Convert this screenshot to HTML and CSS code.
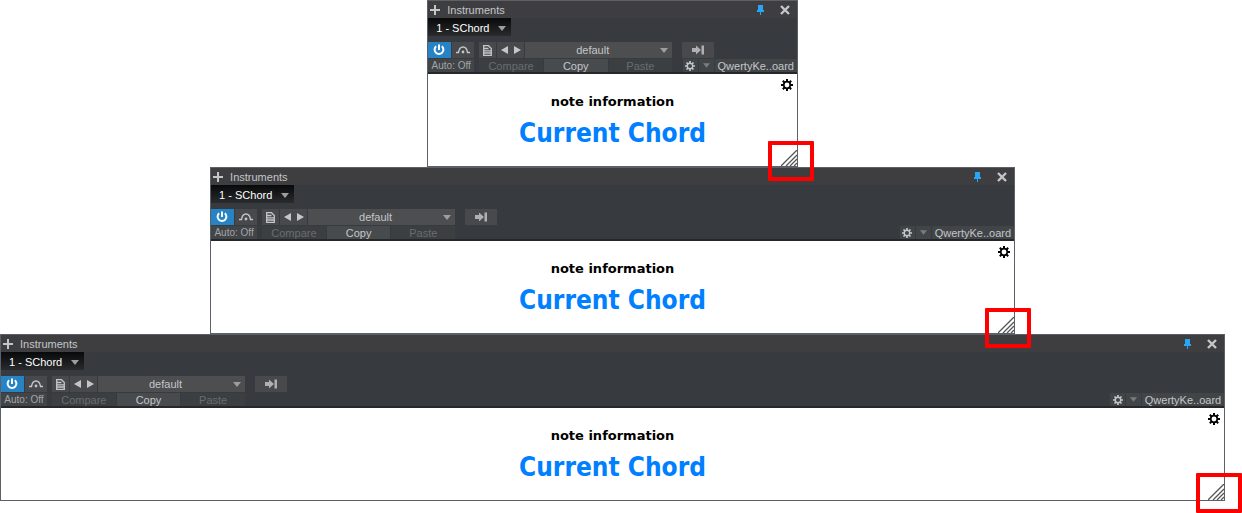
FILE: index.html
```html
<!DOCTYPE html>
<html lang="en">
<head>
<meta charset="utf-8">
<title>Instruments</title>
<link rel="stylesheet" href="styles.css">
</head>
<body>
<svg class="sprite" aria-hidden="true">
  <symbol id="plus" viewBox="0 0 10 10"><path d="M5 0V10M0 5H10" stroke="currentColor" stroke-width="2"/></symbol>
  <symbol id="pin" viewBox="0 0 9 10"><path d="M2 0H7V5H8V7H5V10H4V7H1V5H2Z" fill="currentColor"/></symbol>
  <symbol id="close" viewBox="0 0 10 10"><path d="M1 1L9 9M9 1L1 9" stroke="currentColor" stroke-width="2.4"/></symbol>
  <symbol id="down" viewBox="0 0 8 5"><path d="M0 0H8L4 5Z" fill="currentColor"/></symbol>
  <symbol id="left" viewBox="0 0 7 8"><path d="M7 0V8L0 4Z" fill="currentColor"/></symbol>
  <symbol id="right" viewBox="0 0 7 8"><path d="M0 0V8L7 4Z" fill="currentColor"/></symbol>
  <symbol id="power" viewBox="0 0 12 12"><path d="M3.2 2.2A4.4 4.4 0 1 0 8.8 2.2M6 .5V6" fill="none" stroke="currentColor" stroke-width="2"/></symbol>
  <symbol id="bypass" viewBox="0 0 14 8"><path d="M0 6.5H2.5C3 3 4.5 1 7 1S11 3 11.5 6.5H14" fill="none" stroke="currentColor" stroke-width="1.4"/><circle cx="7" cy="6" r="1.4" fill="currentColor"/></symbol>
  <symbol id="doc" viewBox="0 0 9 11"><path d="M.7.7H5.5L8.3 3.500V10.300H.7ZM1 3.500H5.500M1 5.800H8M1 8H8" fill="none" stroke="currentColor" stroke-width="1.300"/></symbol>
  <symbol id="jump" viewBox="0 0 12 10"><path d="M0 3H4V.5L9 5L4 9.500V7H0ZM9.500 0.500H12V9.500H9.500Z" fill="currentColor"/></symbol>
  <symbol id="gear" viewBox="0 0 12 12"><circle cx="6" cy="6" r="3.300" fill="none" stroke="currentColor" stroke-width="1.700"/><path d="M6 0V2.500M6 9.500V12M0 6H2.500M9.500 6H12M1.800 1.800L3.500 3.500M8.500 8.500L10.200 10.200M10.200 1.800L8.500 3.500M3.500 8.500L1.800 10.200" stroke="currentColor" stroke-width="2"/></symbol>
  <symbol id="grip" viewBox="0 0 16 16"><path d="M0 16L16 0M5 16L16 5M9 16L16 9M13 16L16 13" stroke="currentColor" stroke-width="1.300"/></symbol>
</svg>
<main class="stack">
  <section class="panel panel-small">
    <header class="titlebar">
      <button class="bare" aria-label="Add"><svg class="i10"><use href="#plus"/></svg></button>
      <h2 class="title">Instruments</h2>
      <button class="bare pin" aria-label="Pin"><svg class="pin-icon"><use href="#pin"/></svg></button>
      <button class="bare" aria-label="Close"><svg class="i10"><use href="#close"/></svg></button>
    </header>
    <div class="controls">
      <button class="tab">1 - SChord <svg class="down"><use href="#down"/></svg></button>
      <div class="row row-top">
        <div class="group state">
          <button class="cell power" aria-label="Power"><svg class="i12"><use href="#power"/></svg></button>
          <button class="cell" aria-label="Bypass"><svg class="bypass"><use href="#bypass"/></svg></button>
        </div>
        <div class="group presets">
          <button class="cell file" aria-label="Preset menu"><svg class="doc"><use href="#doc"/></svg></button>
          <div class="cell arrows"><button class="bare" aria-label="Previous"><svg class="arrow"><use href="#left"/></svg></button><button class="bare" aria-label="Next"><svg class="arrow"><use href="#right"/></svg></button></div>
          <div class="cell preset"><select class="select" aria-label="Preset"><option>default</option></select><svg class="down"><use href="#down"/></svg></div>
        </div>
        <button class="cell jump" aria-label="Output"><svg class="jump-icon"><use href="#jump"/></svg></button>
      </div>
      <div class="row row-bottom">
        <div class="group state"><button class="cell auto">Auto: Off</button></div>
        <div class="group presets compare-group">
          <button class="cell dim" disabled>Compare</button><button class="cell copy">Copy</button><button class="cell dim" disabled>Paste</button>
        </div>
        <div class="group device">
          <button class="cell" aria-label="Settings"><svg class="gear-small"><use href="#gear"/></svg></button>
          <button class="cell faint" aria-label="Device menu"><svg class="down"><use href="#down"/></svg></button>
          <button class="cell keyboard">QwertyKe..oard</button>
        </div>
      </div>
    </div>
    <div class="view">
      <button class="bare settings" aria-label="Plugin settings"><svg class="i12"><use href="#gear"/></svg></button>
      <p class="note">note information</p>
      <p class="chord">Current Chord</p>
      <svg class="grip"><use href="#grip"/></svg>
    </div>
    <span class="marker"></span>
  </section>

  <section class="panel panel-medium">
    <header class="titlebar">
      <button class="bare" aria-label="Add"><svg class="i10"><use href="#plus"/></svg></button>
      <h2 class="title">Instruments</h2>
      <button class="bare pin" aria-label="Pin"><svg class="pin-icon"><use href="#pin"/></svg></button>
      <button class="bare" aria-label="Close"><svg class="i10"><use href="#close"/></svg></button>
    </header>
    <div class="controls">
      <button class="tab">1 - SChord <svg class="down"><use href="#down"/></svg></button>
      <div class="row row-top">
        <div class="group state">
          <button class="cell power" aria-label="Power"><svg class="i12"><use href="#power"/></svg></button>
          <button class="cell" aria-label="Bypass"><svg class="bypass"><use href="#bypass"/></svg></button>
        </div>
        <div class="group presets">
          <button class="cell file" aria-label="Preset menu"><svg class="doc"><use href="#doc"/></svg></button>
          <div class="cell arrows"><button class="bare" aria-label="Previous"><svg class="arrow"><use href="#left"/></svg></button><button class="bare" aria-label="Next"><svg class="arrow"><use href="#right"/></svg></button></div>
          <div class="cell preset"><select class="select" aria-label="Preset"><option>default</option></select><svg class="down"><use href="#down"/></svg></div>
        </div>
        <button class="cell jump" aria-label="Output"><svg class="jump-icon"><use href="#jump"/></svg></button>
      </div>
      <div class="row row-bottom">
        <div class="group state"><button class="cell auto">Auto: Off</button></div>
        <div class="group presets compare-group">
          <button class="cell dim" disabled>Compare</button><button class="cell copy">Copy</button><button class="cell dim" disabled>Paste</button>
        </div>
        <div class="group device">
          <button class="cell" aria-label="Settings"><svg class="gear-small"><use href="#gear"/></svg></button>
          <button class="cell faint" aria-label="Device menu"><svg class="down"><use href="#down"/></svg></button>
          <button class="cell keyboard">QwertyKe..oard</button>
        </div>
      </div>
    </div>
    <div class="view">
      <button class="bare settings" aria-label="Plugin settings"><svg class="i12"><use href="#gear"/></svg></button>
      <p class="note">note information</p>
      <p class="chord">Current Chord</p>
      <svg class="grip"><use href="#grip"/></svg>
    </div>
    <span class="marker"></span>
  </section>

  <section class="panel panel-large">
    <header class="titlebar">
      <button class="bare" aria-label="Add"><svg class="i10"><use href="#plus"/></svg></button>
      <h2 class="title">Instruments</h2>
      <button class="bare pin" aria-label="Pin"><svg class="pin-icon"><use href="#pin"/></svg></button>
      <button class="bare" aria-label="Close"><svg class="i10"><use href="#close"/></svg></button>
    </header>
    <div class="controls">
      <button class="tab">1 - SChord <svg class="down"><use href="#down"/></svg></button>
      <div class="row row-top">
        <div class="group state">
          <button class="cell power" aria-label="Power"><svg class="i12"><use href="#power"/></svg></button>
          <button class="cell" aria-label="Bypass"><svg class="bypass"><use href="#bypass"/></svg></button>
        </div>
        <div class="group presets">
          <button class="cell file" aria-label="Preset menu"><svg class="doc"><use href="#doc"/></svg></button>
          <div class="cell arrows"><button class="bare" aria-label="Previous"><svg class="arrow"><use href="#left"/></svg></button><button class="bare" aria-label="Next"><svg class="arrow"><use href="#right"/></svg></button></div>
          <div class="cell preset"><select class="select" aria-label="Preset"><option>default</option></select><svg class="down"><use href="#down"/></svg></div>
        </div>
        <button class="cell jump" aria-label="Output"><svg class="jump-icon"><use href="#jump"/></svg></button>
      </div>
      <div class="row row-bottom">
        <div class="group state"><button class="cell auto">Auto: Off</button></div>
        <div class="group presets compare-group">
          <button class="cell dim" disabled>Compare</button><button class="cell copy">Copy</button><button class="cell dim" disabled>Paste</button>
        </div>
        <div class="group device">
          <button class="cell" aria-label="Settings"><svg class="gear-small"><use href="#gear"/></svg></button>
          <button class="cell faint" aria-label="Device menu"><svg class="down"><use href="#down"/></svg></button>
          <button class="cell keyboard">QwertyKe..oard</button>
        </div>
      </div>
    </div>
    <div class="view">
      <button class="bare settings" aria-label="Plugin settings"><svg class="i12"><use href="#gear"/></svg></button>
      <p class="note">note information</p>
      <p class="chord">Current Chord</p>
      <svg class="grip"><use href="#grip"/></svg>
    </div>
    <span class="marker"></span>
  </section>
</main>
</body>
</html>
```
FILE: styles.css
```css
* { box-sizing: border-box; }
body {
  margin: 0;
  background: #fff;
  font-family: "Liberation Sans", Arial, sans-serif;
  font-size: 11px;
}
.sprite { display: none; }
svg { display: block; flex: none; }
button, select { font: inherit; color: inherit; border: 0; margin: 0; padding: 0; background: none; }
.stack {
  display: flex;
  flex-direction: column;
  align-items: center;
  padding: 0 17px 12px 0;
}
.panel {
  position: relative;
  min-width: 370px;
  border: 1px solid #5c6068;
  color: #c4c6c8;
}
.panel-small { width: 30.25%; }
.panel-medium { width: 65.7%; }
.panel-large { width: 100%; }

.titlebar {
  display: flex;
  align-items: center;
  height: 17px;
  padding: 0 7px 0 2px;
  background: #3e3e41;
}
.title { margin: 0 auto 0 7px; font-size: 11px; font-weight: 400; line-height: 16px; }
.bare { display: flex; align-items: center; justify-content: center; }
.pin { margin-right: 15px; color: #28a5f5; }
.pin-icon { width: 9px; height: 10px; }
.i10 { width: 10px; height: 10px; }
.i12 { width: 12px; height: 12px; }

.controls {
  background: #373a3e;
  border-bottom: 2px solid #25282b;
}
.tab {
  display: flex;
  align-items: center;
  gap: 9px;
  height: 18px;
  width: 83px;
  padding: 2px 0 0 8px;
  color: #fff;
  background: linear-gradient(#08090a, #292b2d);
  white-space: nowrap;
}
.down { width: 8px; height: 5px; color: #9c9ea0; }
.row { display: flex; }
.row-top { margin-top: 6px; }
.row-bottom { margin-top: 1px; }
.group { display: flex; gap: 1px; }
.cell {
  display: flex;
  align-items: center;
  justify-content: center;
  height: 16px;
  background: #47494c;
  white-space: nowrap;
}
.row-bottom .cell { height: 13px; background: #424548; }
.state { width: 46px; margin-right: 5px; }
.state .cell { flex: 1; }
.row-top .power { background: #2684c6; color: #fff; }
.row-bottom .auto { color: #a2a4a7; font-size: 10px; }
.presets { width: 193px; }
.file { width: 17px; }
.arrows { width: 27px; gap: 6px; }
.preset { position: relative; flex: 1; background: #4c4e50; }
.select { width: 100%; height: 100%; padding-right: 12px; appearance: none; text-align: center; text-align-last: center; }
.preset .down { position: absolute; right: 4px; top: 6px; pointer-events: none; }
.jump { width: 32px; margin-left: 10px; }
.compare-group .cell { flex: 1; }
.row-bottom .dim { background: #3c3f42; color: #696c6f; }
.row-bottom .copy { background: #484b4e; }
.device { margin-left: auto; }
.device .cell { width: 15px; }
.device .keyboard { width: 82px; }
.device .faint .down { width: 7px; color: #797c7f; }
.bypass { width: 14px; height: 8px; }
.doc { width: 9px; height: 11px; }
.arrow { width: 7px; height: 8px; }
.jump-icon { width: 12px; height: 10px; color: #aeb0b2; }
.gear-small { width: 10px; height: 10px; }

.view {
  position: relative;
  padding: 20px 0 14px;
  background: #fff;
  text-align: center;
}
.note, .chord { margin: 0; font-weight: 700; }
.note { color: #000; font-family: "DejaVu Sans", sans-serif; font-size: 13px; line-height: 16px; margin-bottom: 4px; }
.chord { color: #0080ff; font-family: "DejaVu Sans Condensed", "DejaVu Sans", sans-serif; font-size: 26px; line-height: 38px; }
.settings { position: absolute; top: 5px; right: 4px; color: #000; }
.grip { position: absolute; right: 0; bottom: 0; width: 16px; height: 16px; color: #555; }
.marker {
  position: absolute;
  z-index: 1;
  right: -17px;
  bottom: -15px;
  width: 46px;
  height: 40px;
  border: 4px solid #f00;
  border-radius: 1px;
  pointer-events: none;
}
.panel-large .marker { right: -18px; bottom: -13px; }
```
